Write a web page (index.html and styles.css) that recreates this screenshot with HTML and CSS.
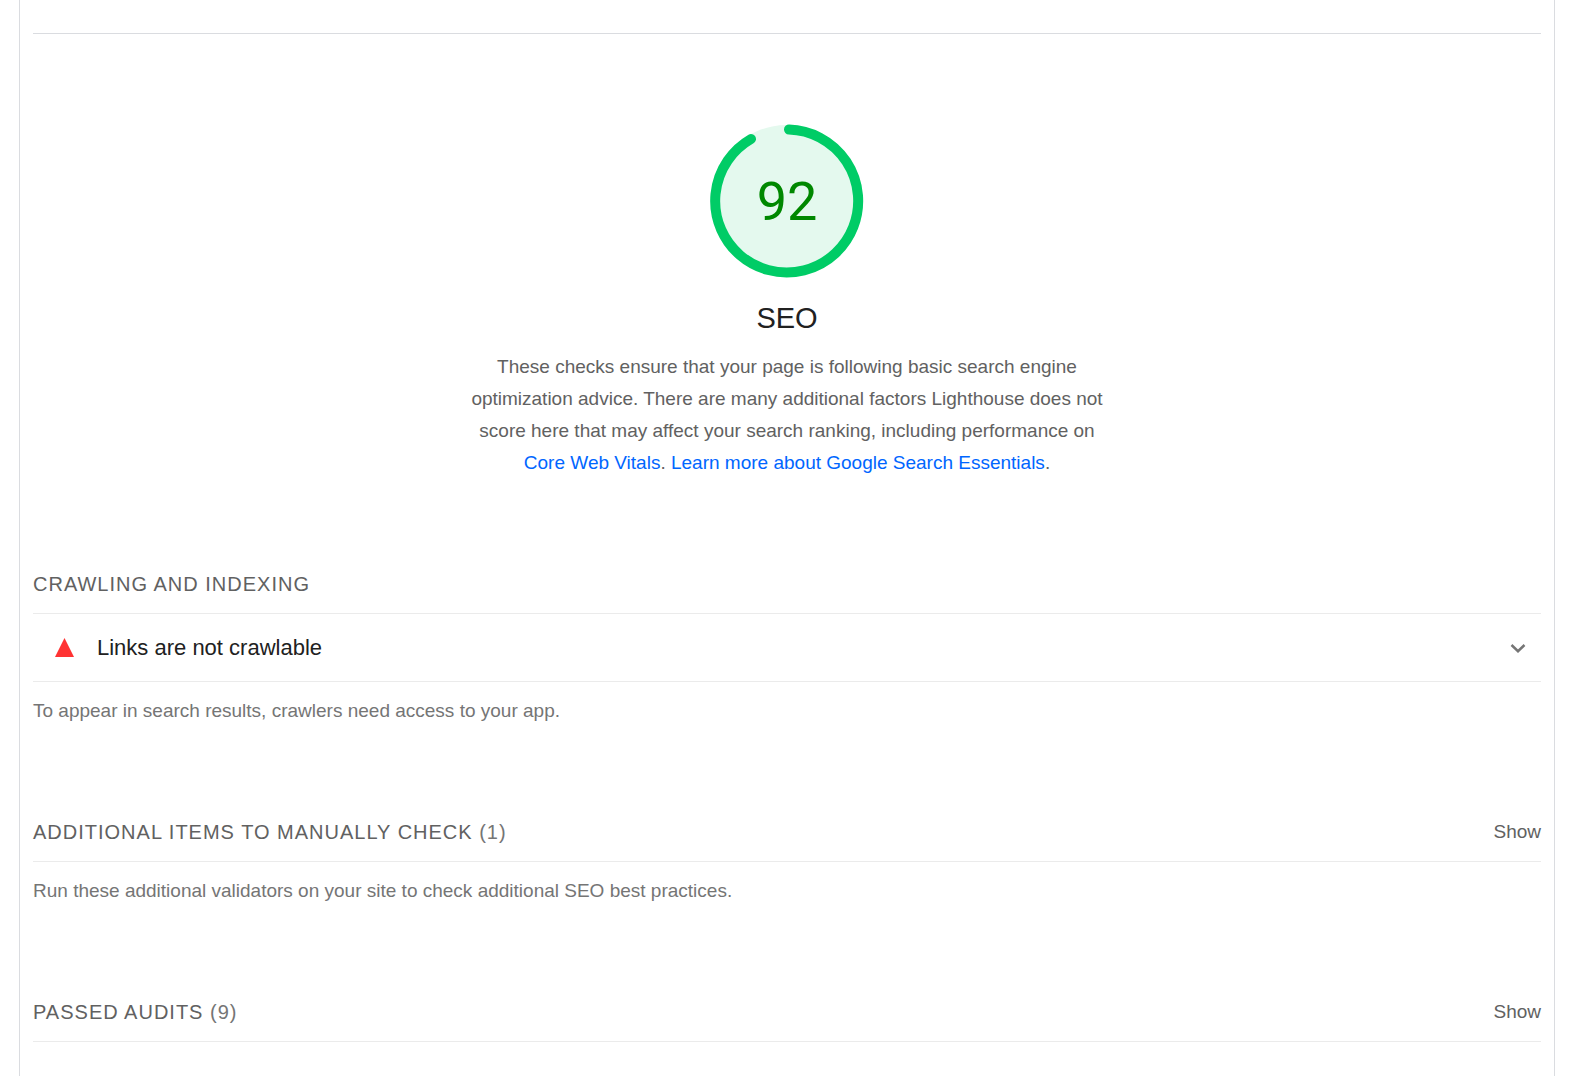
FILE: index.html
```html
<!DOCTYPE html>
<html lang="en">
  <head>
    <meta charset="utf-8" />
    <title>SEO</title>
    <link rel="stylesheet" href="styles.css">
  </head>

  <body>
    <main class="report">
      <section class="category">
        <div class="category-header">
          <div class="gauge">
            <svg class="gauge-svg" viewBox="0 0 154 154" aria-hidden="true">
              <circle class="gauge-base" cx="77" cy="77" r="76" />
              <path class="gauge-arc" d="M79 5.500A71.500 71.500 0 1 1 41 15" />
            </svg>
            <span class="gauge-score">92</span>
          </div>
          <h1 class="category-title">SEO</h1>
          <p class="category-text">
            These checks ensure that your page is following basic search engine
            optimization advice. There are many additional factors Lighthouse does not
            score here that may affect your search ranking, including performance on
            <a href="#">Core Web Vitals</a>. <a href="#">Learn more about Google Search Essentials</a>.
          </p>
        </div>

        <!-- Crawling -->
        <section class="group">
          <div class="group-header">
            <h2 class="group-title">Crawling and Indexing</h2>
          </div>
          <button class="audit" type="button">
            <svg class="audit-icon" viewBox="0 0 19 19" aria-hidden="true">
              <path d="M9.500 0L19 19H0z" />
            </svg>
            <span class="audit-title">Links are not crawlable</span>
            <svg class="chevron" viewBox="0 0 16 16" aria-hidden="true">
              <path d="M1.500 5L8 11.200L14.500 5" />
            </svg>
          </button>
          <p class="group-text">To appear in search results, crawlers need access to your app.</p>
        </section>

        <!-- Manual checks -->
        <section class="group">
          <div class="group-header">
            <h2 class="group-title">Additional items to manually check <span class="count">(1)</span></h2>
            <button class="toggle" type="button">Show</button>
          </div>
          <p class="group-text">Run these additional validators on your site to check additional SEO best practices.</p>
        </section>

        <!-- Passed -->
        <section class="group">
          <div class="group-header">
            <h2 class="group-title">Passed audits <span class="count">(9)</span></h2>
            <button class="toggle" type="button">Show</button>
          </div>
        </section>
      </section>
    </main>
  </body>
</html>
```
FILE: styles.css
```css
* {
  box-sizing: border-box;
}

body {
  margin: 0;
  background: #fff;
  color: #616161;
  font-family: "Liberation Sans", Arial, sans-serif;
  font-size: 19px;
  line-height: 32px;
}

h1,
h2,
p {
  margin: 0;
  font-weight: normal;
}

a {
  color: #0066ff;
  text-decoration: none;
}

button {
  padding: 0;
  border: 0;
  background: none;
  color: inherit;
  font: inherit;
  cursor: pointer;
}

/* report column */
.report {
  min-height: 100vh;
  margin: 0 41px 0 19px;
  padding: 33px 13px 0;
  border: solid #dadce0;
  border-width: 0 1px;
}

.category {
  padding-top: 90px;
  border-top: 1px solid #dadce0;
}

.category-header {
  display: flex;
  flex-direction: column;
  align-items: center;
}

/* score gauge */
.gauge {
  display: grid;
  place-items: center;
  margin-bottom: 24px;
}

.gauge-svg,
.gauge-score {
  grid-area: 1 / 1;
}

.gauge-svg {
  width: 154px;
  height: 154px;
}

.gauge-base {
  fill: #e4f9ee;
}

.gauge-arc {
  fill: none;
  stroke: #00cc66;
  stroke-width: 10px;
  stroke-linecap: round;
}

.gauge-score {
  padding-top: 2px;
  color: #080;
  font-family: Roboto, sans-serif;
  font-size: 54px;
}

.category-title {
  margin-bottom: 17px;
  color: #212121;
  font-size: 29px;
}

.category-text {
  max-width: 640px;
  text-align: center;
}

/* audit groups */
.group {
  margin-top: 89px;
}

.group-header {
  display: flex;
  justify-content: space-between;
  padding-bottom: 13px;
  border-bottom: 1px solid #ebebeb;
}

.group-title {
  font-size: 20px;
  letter-spacing: 1px;
  text-transform: uppercase;
}

.count,
.group-text {
  color: #757575;
}

.group-text {
  margin-top: 13px;
}

.audit {
  display: flex;
  align-items: center;
  width: 100%;
  height: 68px;
  padding: 0 15px 0 22px;
  border-bottom: 1px solid #ebebeb;
  color: #212121;
  font-size: 22px;
  text-align: left;
}

.audit-icon {
  width: 19px;
  height: 19px;
  fill: #f33;
}

.audit-title {
  flex: 1;
  margin-left: 23px;
}

.chevron {
  width: 16px;
  height: 16px;
  fill: none;
  stroke: #757575;
  stroke-width: 2.5px;
}
```
